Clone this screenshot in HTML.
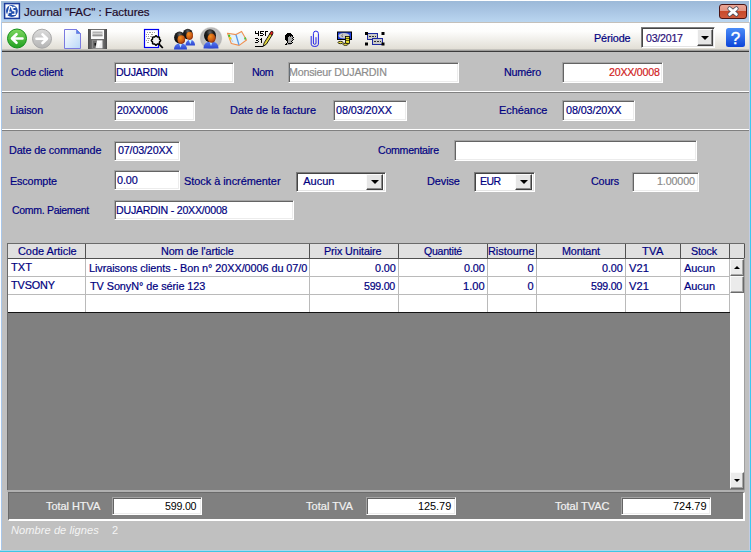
<!DOCTYPE html>
<html><head><meta charset="utf-8">
<style>
*{box-sizing:border-box;margin:0;padding:0}
html,body{width:751px;height:552px;overflow:hidden;background:#fff}
body{position:relative;font-family:"Liberation Sans",sans-serif;font-size:11px;color:#000080}
.a{position:absolute}
.tx{position:absolute;white-space:nowrap;line-height:13px;height:13px;transform-origin:0 0;-webkit-text-stroke:0.2px currentColor}
#title{left:1px;top:1px;width:748px;height:21px;background:linear-gradient(#9cb9d8 0%,#aac6e4 50%,#bad6f0 100%)}
#close{left:719px;top:4px;width:28px;height:15px;border:1px solid #4a1414;border-radius:3px;background:linear-gradient(#eba696 0%,#e29583 45%,#c9492a 50%,#cf5a3c 100%)}
#tb{left:2px;top:22px;width:747px;height:30px;border-top:1px solid #c4c0ba;border-bottom:1px solid #3c3c3c;background:linear-gradient(#fff 0%,#fdfdfc 30%,#e2dfd6 92%,#8a8a8a 100%)}
#form{left:2px;top:52px;width:747px;height:498px;background:#c0c0c0}
.inp{position:absolute;background:#fff;border-top:1px solid #a4a4a4;border-left:1px solid #a4a4a4;border-right:1px solid #fff;border-bottom:1px solid #fff;box-shadow:inset 1px 1px 0 #646464, inset -1px -1px 0 #ececec}
.sep{position:absolute;left:2px;width:747px;height:2px;border-top:1px solid #fff;border-bottom:1px solid #808080}
.btn{position:absolute;background:#e6e6e6;border-top:1px solid #fbfbfb;border-left:1px solid #fbfbfb;border-right:1px solid #404040;border-bottom:1px solid #404040;box-shadow:inset -1px -1px 0 #8c8c8c}
.btn i{position:absolute;left:50%;top:50%;margin-left:-4px;margin-top:-2px;width:0;height:0;border-left:4px solid transparent;border-right:4px solid transparent;border-top:4px solid #000}
.sb{position:absolute;background:#ebebeb;border-top:1px solid #fafafa;border-left:1px solid #fafafa;border-right:1px solid #6a6a6a;border-bottom:1px solid #6a6a6a;box-shadow:inset -1px -1px 0 #a8a8a8}
.sb i.up{position:absolute;left:3px;top:6px;width:0;height:0;border-left:3px solid transparent;border-right:3px solid transparent;border-bottom:3px solid #000}
.sb i.dn{position:absolute;left:3px;top:6px;width:0;height:0;border-left:3px solid transparent;border-right:3px solid transparent;border-top:3px solid #000}

.inp.cmb{border-top-color:#7c7c7c;border-left-color:#7c7c7c;box-shadow:inset 1px 1px 0 #454545, inset -1px -1px 0 #e4e4e4}

</style></head><body>
<div class="a" id="win" style="left:0;top:0;width:751px;height:552px;background:#fff"></div>
<div class="a" id="title"></div>
<div class="a" id="close"></div>
<div class="a" id="tb"></div>
<div class="a" id="form"></div>
<div class="a" style="left:0;top:0;width:1px;height:552px;background:#fff"></div>
<div class="a" style="left:1px;top:22px;width:1px;height:528px;background:#a9c7ea"></div>
<div class="a" style="left:749px;top:22px;width:1px;height:528px;background:#c4cce2"></div>
<div class="a" style="left:750px;top:0;width:1px;height:552px;background:#3ac8f0"></div>
<div class="a" style="left:0;top:550px;width:751px;height:1px;background:#a6d8ee"></div>
<div class="a" style="left:0;top:551px;width:751px;height:1px;background:#3ec6e4"></div>
<!-- toolbar combo -->
<div class="inp cmb" style="left:641px;top:27px;width:74px;height:21px"><div class="btn" style="left:55px;top:1px;width:16px;height:17px"><i></i></div></div>
<!-- section 1 -->
<div class="inp" style="left:114px;top:62px;width:120px;height:21px"></div>
<div class="inp" style="left:288px;top:62px;width:171px;height:21px"></div>
<div class="inp" style="left:562px;top:62px;width:101px;height:21px"></div>
<div class="sep" style="top:91px"></div>
<!-- section 2 -->
<div class="inp" style="left:114px;top:100px;width:81px;height:21px"></div>
<div class="inp" style="left:333px;top:100px;width:74px;height:21px"></div>
<div class="inp" style="left:562px;top:100px;width:73px;height:21px"></div>
<div class="sep" style="top:129px"></div>
<!-- section 3 -->
<div class="inp" style="left:114px;top:141px;width:66px;height:20px"></div>
<div class="inp" style="left:454px;top:140px;width:243px;height:21px"></div>
<div class="inp" style="left:114px;top:170px;width:66px;height:20px"></div>
<div class="inp cmb" style="left:296px;top:172px;width:90px;height:20px"><div class="btn" style="left:69px;top:1px;width:17px;height:16px"><i></i></div></div>
<div class="inp cmb" style="left:474px;top:172px;width:61px;height:20px"><div class="btn" style="left:40px;top:1px;width:17px;height:16px"><i></i></div></div>
<div class="inp" style="left:632px;top:172px;width:67px;height:20px"></div>
<div class="inp" style="left:114px;top:200px;width:180px;height:20px"></div>
<!-- grid -->
<div class="a" style="left:7px;top:243px;width:738px;height:247px;background:#808080;border-left:1px solid #6a6a6a;border-top:1px solid #6a6a6a;border-right:1px solid #a0a0a0"></div>
<div class="a" style="left:8px;top:244px;width:722px;height:68px;background:#fff"></div>
<div class="a" style="left:8px;top:244px;width:736px;height:14px;background:#e0e0e0"></div>
<div class="a" style="left:8px;top:258px;width:736px;height:1px;background:#505050"></div>
<div class="a" style="left:8px;top:276px;width:722px;height:1px;background:#bababa"></div>
<div class="a" style="left:8px;top:294px;width:722px;height:1px;background:#bababa"></div>
<div class="a" style="left:8px;top:312px;width:722px;height:1px;background:#141414"></div>
<div class="a" style="left:85px;top:244px;width:1px;height:14px;background:#505050"></div>
<div class="a" style="left:85px;top:259px;width:1px;height:53px;background:#bababa"></div>
<div class="a" style="left:309px;top:244px;width:1px;height:14px;background:#505050"></div>
<div class="a" style="left:309px;top:259px;width:1px;height:53px;background:#bababa"></div>
<div class="a" style="left:398px;top:244px;width:1px;height:14px;background:#505050"></div>
<div class="a" style="left:398px;top:259px;width:1px;height:53px;background:#bababa"></div>
<div class="a" style="left:487px;top:244px;width:1px;height:14px;background:#505050"></div>
<div class="a" style="left:487px;top:259px;width:1px;height:53px;background:#bababa"></div>
<div class="a" style="left:536px;top:244px;width:1px;height:14px;background:#505050"></div>
<div class="a" style="left:536px;top:259px;width:1px;height:53px;background:#bababa"></div>
<div class="a" style="left:625px;top:244px;width:1px;height:14px;background:#505050"></div>
<div class="a" style="left:625px;top:259px;width:1px;height:53px;background:#bababa"></div>
<div class="a" style="left:680px;top:244px;width:1px;height:14px;background:#505050"></div>
<div class="a" style="left:680px;top:259px;width:1px;height:53px;background:#bababa"></div>
<div class="a" style="left:729px;top:244px;width:1px;height:14px;background:#505050"></div>
<div class="a" style="left:744px;top:244px;width:1px;height:14px;background:#505050"></div>
<!-- scrollbar -->
<div class="a" style="left:729px;top:259px;width:1px;height:53px;background:#bababa"></div>
<div class="a" style="left:730px;top:259px;width:14px;height:230px;background:#fff"></div>
<div class="sb" style="left:730px;top:259px;width:14px;height:17px"><i class="up"></i></div>
<div class="sb" style="left:730px;top:276px;width:14px;height:17px"></div>
<div class="sb" style="left:730px;top:472px;width:14px;height:17px"><i class="dn"></i></div>
<!-- totals -->
<div class="a" style="left:7px;top:490px;width:738px;height:2px;background:#b0b0b0"></div>
<div class="a" style="left:8px;top:492px;width:737px;height:29px;background:#808080;border-left:1px solid #6a6a6a;border-top:1px solid #6a6a6a;border-right:2px solid #fff;border-bottom:2px solid #fff"></div>
<div class="inp" style="left:112px;top:497px;width:90px;height:18px"></div>
<div class="inp" style="left:366px;top:497px;width:90px;height:18px"></div>
<div class="inp" style="left:621px;top:497px;width:90px;height:18px"></div>

<svg class="a" style="left:0;top:0" width="751" height="60" viewBox="0 0 751 60">
<defs><linearGradient id="flop" x1="0" y1="0" x2="1" y2="0"><stop offset="0" stop-color="#4a4a4a"/><stop offset="0.2" stop-color="#6e6e6e"/><stop offset="0.8" stop-color="#6e6e6e"/><stop offset="1" stop-color="#4a4a4a"/></linearGradient>
<linearGradient id="gg" x1="0" y1="0" x2="0" y2="1"><stop offset="0" stop-color="#7fd860"/><stop offset="1" stop-color="#20a020"/></linearGradient>
<linearGradient id="gy" x1="0" y1="0" x2="0" y2="1"><stop offset="0" stop-color="#dcdcdc"/><stop offset="1" stop-color="#b4b4b4"/></linearGradient>
<linearGradient id="doc" x1="0" y1="0" x2="1" y2="1"><stop offset="0" stop-color="#ffffff"/><stop offset="1" stop-color="#b8d8f8"/></linearGradient>
<linearGradient id="hb" x1="0" y1="0" x2="0" y2="1"><stop offset="0" stop-color="#4a8cf8"/><stop offset="1" stop-color="#0c44d8"/></linearGradient>
<radialGradient id="halo" cx="0.5" cy="0.5" r="0.5"><stop offset="0" stop-color="#c8c8c8"/><stop offset="0.7" stop-color="#bdbdbd"/><stop offset="0.88" stop-color="#b6b6b6"/><stop offset="1" stop-color="#e4e2dc" stop-opacity="0"/></radialGradient>
<radialGradient id="face" cx="0.35" cy="0.3" r="0.8"><stop offset="0" stop-color="#f5901e"/><stop offset="0.6" stop-color="#c85a14"/><stop offset="1" stop-color="#7a1e06"/></radialGradient><radialGradient id="hair" cx="0.5" cy="0.25" r="0.7"><stop offset="0" stop-color="#6a6a6a"/><stop offset="0.4" stop-color="#202020"/><stop offset="1" stop-color="#0a0a0a"/></radialGradient>
<linearGradient id="body" x1="0" y1="0" x2="0" y2="1"><stop offset="0" stop-color="#5a7af0"/><stop offset="1" stop-color="#2a44d0"/></linearGradient>
</defs>
<!-- title icon -->
<rect x="4.6" y="3.6" width="14.8" height="14.8" fill="#fff" stroke="#1c3c9c" stroke-width="1.5"/>
<circle cx="11.9" cy="11" r="5.9" fill="#1e4eae"/>
<path d="M7.6,15 L9.8,6.6 L11.3,6.6 L12.3,10.2" fill="none" stroke="#fff" stroke-width="1.2"/>
<path d="M8.4,12.2 H11.2" stroke="#fff" stroke-width="1.2"/>
<path d="M15.4,7.3 H12.8 V10.6 H15 V14.3 H11.8" fill="none" stroke="#fff" stroke-width="1.2"/>
<!-- back -->
<circle cx="17" cy="38.5" r="9.5" fill="url(#gg)" stroke="#14901a" stroke-width="1"/>
<path d="M22.5 38.5H12.5M16.5 34.2L12 38.5L16.5 42.8" fill="none" stroke="#fff" stroke-width="2.6" stroke-linecap="round" stroke-linejoin="round"/>
<!-- forward -->
<circle cx="42" cy="38.7" r="9.5" fill="url(#gy)" stroke="#a8a8a8" stroke-width="1"/>
<path d="M36.5 38.7H46.5M42.5 34.4L47 38.7L42.5 43" fill="none" stroke="#fff" stroke-width="2.6" stroke-linecap="round" stroke-linejoin="round"/>
<!-- new doc -->
<path d="M64.5 29.5H76.5L80.5 33.5V48.5H64.5Z" fill="url(#doc)" stroke="#7a7ae0" stroke-width="1"/>
<path d="M76.5 29.5V33.5H80.5Z" fill="#4a90e8" stroke="#7a7ae0" stroke-width="0.8"/>
<!-- floppy -->
<rect x="88" y="29" width="19" height="20" fill="url(#flop)"/>
<rect x="91" y="30" width="13" height="9" fill="#fafafa"/>
<rect x="92.5" y="31.5" width="10" height="5" fill="#b4b4b4"/>
<rect x="92.5" y="33" width="10" height="0.8" fill="#d8d8d8"/>
<rect x="92.5" y="35.2" width="10" height="0.8" fill="#8c8c8c"/>
<rect x="92.5" y="40.3" width="10" height="8" fill="#f0f0f0"/>
<path d="M92.5,40.3 H97 L95.5,48.3 H92.5Z" fill="#6a6a6a"/>
<path d="M97,41 L101.5,41 L98,48.3" fill="#fff"/>
<rect x="94.5" y="43" width="1.4" height="2.5" fill="#101010"/>
<!-- search doc -->
<rect x="144.5" y="29.5" width="14" height="18" fill="#fff" stroke="#0000f0" stroke-width="1.2"/>
<g fill="#a0a0a0"><rect x="147" y="32" width="1" height="1"/><rect x="149" y="32" width="2" height="1"/><rect x="152" y="32" width="1" height="1"/><rect x="154" y="32" width="1" height="1"/>
<rect x="146" y="34" width="1" height="1"/><rect x="148" y="34" width="1" height="1"/><rect x="151" y="34" width="2" height="1"/>
<rect x="146" y="36" width="1" height="1"/><rect x="148" y="36" width="1" height="1"/><rect x="150" y="36" width="2" height="1"/>
<rect x="147" y="38" width="3" height="1"/><rect x="146" y="40" width="1" height="1"/><rect x="148" y="40" width="1" height="1"/><rect x="147" y="42" width="2" height="1"/></g>
<path d="M158.8 43.8L162.8 48" stroke="#000" stroke-width="1.8"/>
<path d="M160.65,40.50 L160.50,40.94 L160.12,41.32 L159.71,41.63 L159.46,41.94 L159.42,42.33 L159.49,42.83 L159.49,43.37 L159.29,43.79 L158.87,43.99 L158.33,43.99 L157.83,43.92 L157.44,43.96 L157.13,44.21 L156.82,44.62 L156.44,45.00 L156.00,45.15 L155.56,45.00 L155.18,44.62 L154.87,44.21 L154.56,43.96 L154.17,43.92 L153.67,43.99 L153.13,43.99 L152.71,43.79 L152.51,43.37 L152.51,42.83 L152.58,42.33 L152.54,41.94 L152.29,41.63 L151.88,41.32 L151.50,40.94 L151.35,40.50 L151.50,40.06 L151.88,39.68 L152.29,39.37 L152.54,39.06 L152.58,38.67 L152.51,38.17 L152.51,37.63 L152.71,37.21 L153.13,37.01 L153.67,37.01 L154.17,37.08 L154.56,37.04 L154.87,36.79 L155.18,36.38 L155.56,36.00 L156.00,35.85 L156.44,36.00 L156.82,36.38 L157.13,36.79 L157.44,37.04 L157.83,37.08 L158.33,37.01 L158.87,37.01 L159.29,37.21 L159.49,37.63 L159.49,38.17 L159.42,38.67 L159.46,39.06 L159.71,39.37 L160.12,39.68 L160.50,40.06Z" fill="#f2f2f2" stroke="#000" stroke-width="1.5"/>
<!-- two people -->
<path d="M185.5,45.5 C185.5,42.3 187.4,39.8 190.25,39.8 C193.1,39.8 195,42.3 195,45.5 Z" fill="url(#body)"/>
<path d="M188.65,39.8 L191.85,39.8 L190.25,44.3Z" fill="#bfefff"/>
<ellipse cx="187.8" cy="34" rx="4.9" ry="5.3" fill="url(#hair)"/>
<ellipse cx="189.6" cy="35.8" rx="3.4" ry="4.1" fill="url(#face)"/>
<path d="M174,49.5 C174,45.8 176.6,43.3 180.5,43.3 C184.4,43.3 187,45.8 187,49.5 Z" fill="url(#body)"/>
<path d="M178.9,43.3 L182.1,43.3 L180.5,47.8Z" fill="#bfefff"/>
<ellipse cx="179.6" cy="37.6" rx="5.5" ry="6" fill="url(#hair)"/>
<ellipse cx="181.3" cy="39.6" rx="3.8" ry="4.3" fill="url(#face)"/>
<!-- single person with halo -->
<circle cx="211" cy="38.2" r="11.8" fill="url(#halo)"/>
<path d="M203.5,48.6 C203.5,44.1 206.5,41.6 211.0,41.6 C215.5,41.6 218.5,44.1 218.5,48.6 Z" fill="url(#body)"/>
<path d="M209.4,41.6 L212.6,41.6 L211.0,46.1Z" fill="#bfefff"/>
<ellipse cx="210" cy="35.6" rx="6" ry="6.4" fill="url(#hair)"/>
<ellipse cx="211.6" cy="38.2" rx="4" ry="4.6" fill="url(#face)"/>
<!-- book -->
<path d="M227.5,33.3 L236,34.6 L241.6,31.4 L246.5,40 L239.2,45.4 L231.3,43.5 Z" fill="#e4f2fc" stroke="#f09050" stroke-width="1.1" stroke-linejoin="round"/>
<path d="M236,34.8 L239,45" stroke="#5a9ae8" stroke-width="1.3"/>
<path d="M230,37 L233,42" stroke="#a8d0f4" stroke-width="1"/>
<ellipse cx="229.2" cy="35.8" rx="1.1" ry="1.3" fill="#40c030"/><ellipse cx="230.3" cy="38.2" rx="1.1" ry="1.2" fill="#f0d000"/>
<ellipse cx="245.2" cy="38.5" rx="1" ry="1.2" fill="#50c040"/>
<!-- 45/31 pencil -->
<rect x="255" y="31" width="1" height="1" fill="#000"/><rect x="258" y="31" width="1" height="1" fill="#000"/><rect x="260" y="31" width="4" height="1" fill="#000"/><rect x="265" y="31" width="3" height="1" fill="#000"/><rect x="255" y="32" width="1" height="1" fill="#000"/><rect x="258" y="32" width="1" height="1" fill="#000"/><rect x="260" y="32" width="1" height="1" fill="#000"/><rect x="265" y="32" width="1" height="1" fill="#000"/><rect x="255" y="33" width="4" height="1" fill="#000"/><rect x="260" y="33" width="3" height="1" fill="#000"/><rect x="265" y="33" width="1" height="1" fill="#000"/><rect x="258" y="34" width="1" height="1" fill="#000"/><rect x="263" y="34" width="1" height="1" fill="#000"/><rect x="265" y="34" width="1" height="1" fill="#000"/><rect x="258" y="35" width="1" height="1" fill="#000"/><rect x="260" y="35" width="3" height="1" fill="#000"/><rect x="265" y="35" width="1" height="1" fill="#000"/><rect x="255" y="38" width="3" height="1" fill="#000"/><rect x="261" y="38" width="1" height="1" fill="#000"/><rect x="258" y="39" width="1" height="1" fill="#000"/><rect x="260" y="39" width="2" height="1" fill="#000"/><rect x="256" y="40" width="2" height="1" fill="#000"/><rect x="261" y="40" width="1" height="1" fill="#000"/><rect x="258" y="41" width="1" height="1" fill="#000"/><rect x="261" y="41" width="1" height="1" fill="#000"/><rect x="255" y="42" width="3" height="1" fill="#000"/><rect x="261" y="42" width="1" height="1" fill="#000"/><rect x="255" y="46" width="8" height="1" fill="#000"/><path d="M263.2,46.3 L264.2,42.8 L270.2,33.2 L272.4,34.6 L266.4,44.2 Z" fill="#f0e848" stroke="#000" stroke-width="0.9" stroke-linejoin="round"/>
<path d="M269.6,34.1 L270.9,31.6 Q272.2,30.8 273,31.9 L272.8,33.9 L271.9,35.2 Z" fill="#e82020" stroke="#000" stroke-width="0.7"/>
<path d="M264.8,43.5 L270.8,34" stroke="#b8a020" stroke-width="0.6"/>
<!-- face -->
<rect x="287" y="33" width="4" height="1" fill="#000"/><rect x="286" y="34" width="6" height="1" fill="#000"/><rect x="285" y="35" width="8" height="1" fill="#000"/><rect x="285" y="36" width="4" height="1" fill="#000"/><rect x="290" y="36" width="1" height="1" fill="#000"/><rect x="292" y="36" width="1" height="1" fill="#000"/><rect x="285" y="37" width="3" height="1" fill="#000"/><rect x="293" y="37" width="1" height="1" fill="#000"/><rect x="285" y="38" width="3" height="1" fill="#000"/><rect x="292" y="38" width="1" height="1" fill="#000"/><rect x="285" y="39" width="3" height="1" fill="#000"/><rect x="293" y="39" width="1" height="1" fill="#000"/><rect x="286" y="40" width="2" height="1" fill="#000"/><rect x="292" y="40" width="1" height="1" fill="#000"/><rect x="287" y="41" width="1" height="1" fill="#000"/><rect x="291" y="41" width="1" height="1" fill="#000"/><rect x="287" y="42" width="1" height="1" fill="#000"/><rect x="292" y="42" width="1" height="1" fill="#000"/><rect x="286" y="43" width="1" height="1" fill="#000"/><rect x="288" y="43" width="4" height="1" fill="#000"/><rect x="285" y="44" width="2" height="1" fill="#000"/><rect x="289" y="36" width="1" height="1" fill="#a8a8a8"/><rect x="291" y="36" width="1" height="1" fill="#a8a8a8"/><rect x="288" y="37" width="5" height="1" fill="#a8a8a8"/><rect x="288" y="38" width="4" height="1" fill="#a8a8a8"/><rect x="288" y="39" width="5" height="1" fill="#a8a8a8"/><rect x="288" y="40" width="4" height="1" fill="#a8a8a8"/><rect x="288" y="41" width="3" height="1" fill="#a8a8a8"/><rect x="288" y="42" width="4" height="1" fill="#a8a8a8"/><rect x="287" y="43" width="1" height="1" fill="#a8a8a8"/><rect x="287" y="44" width="4" height="1" fill="#a8a8a8"/>
<!-- paperclip -->
<path d="M316,37.2 V43 A1.3,1.3 0 0 1 313.4,43 V33.6 A2.5,2.5 0 0 1 318.4,33.6 V44.2 A3.6,2.3 0 0 1 311.2,44.2 V36" fill="none" stroke="#2424e8" stroke-width="1"/>
<!-- money -->
<rect x="337.5" y="32" width="14" height="7.5" fill="#2040e0" stroke="#000" stroke-width="1"/>
<ellipse cx="344" cy="35.8" rx="5.5" ry="2.8" fill="#c8c8c8"/>
<path d="M343 34.5L341.5 35.8L343 37" fill="none" stroke="#606060" stroke-width="0.8"/>
<rect x="345.5" y="36.5" width="4" height="7" fill="#e8e030" stroke="#000" stroke-width="0.8"/>
<path d="M345.5 38.5H349.5M345.5 40.5H349.5" stroke="#000" stroke-width="0.6"/>
<ellipse cx="340.5" cy="42.5" rx="2.5" ry="1.2" fill="#f0e040" stroke="#000" stroke-width="0.8"/>
<ellipse cx="345.5" cy="44.3" rx="2.5" ry="1.1" fill="#f0e040" stroke="#000" stroke-width="0.8"/>
<!-- selection -->
<rect x="367.5" y="33.5" width="10" height="6" fill="#c8c8c8" stroke="#1c28a0" stroke-width="1"/>
<rect x="372.5" y="38.5" width="10" height="6" fill="#c8c8c8" stroke="#1c28a0" stroke-width="1"/>
<g fill="#303030"><rect x="369" y="36" width="2" height="1"/><rect x="372" y="36" width="2" height="1"/><rect x="375" y="36" width="1" height="1"/>
<rect x="374" y="41" width="2" height="1"/><rect x="377" y="41" width="2" height="1"/><rect x="380" y="41" width="1" height="1"/></g>
<rect x="365" y="32" width="3" height="3" fill="#000"/><rect x="381.5" y="32" width="3" height="3" fill="#000"/>
<rect x="365" y="42.5" width="3" height="3" fill="#000"/><rect x="381.5" y="42.5" width="3" height="3" fill="#000"/>
<!-- help -->
<rect x="726" y="28" width="19" height="19" rx="2.5" fill="url(#hb)"/>
<text x="735.6" y="44.2" font-family="Liberation Sans" font-size="17" fill="#fff" text-anchor="middle" stroke="#fff" stroke-width="0.4">?</text>
<!-- close X -->
<path d="M729.6,8.6L736.4,14.4M736.4,8.6L729.6,14.4" stroke="#404858" stroke-width="4.4" stroke-linecap="round"/>
<path d="M729.6,8.6L736.4,14.4M736.4,8.6L729.6,14.4" stroke="#fff" stroke-width="2.8" stroke-linecap="round"/>
</svg>
<div class="tx" style="left:24.10px;top:5.50px;color:#1e0a28;letter-spacing:-0.011px;font-size:11.5px">Journal "FAC" : Factures</div>
<div class="tx" style="left:594.02px;top:32.00px;color:#000080;letter-spacing:-0.110px;transform:scaleX(0.9824)">Période</div>
<div class="tx" style="left:645.50px;top:32.00px;color:#2a1078;letter-spacing:-0.242px;transform:scaleX(0.9650)">03/2017</div>
<div class="tx" style="left:10.80px;top:66.00px;color:#000080;letter-spacing:-0.154px;transform:scaleX(0.9727)">Code client</div>
<div class="tx" style="left:116.24px;top:66.00px;color:#000080;letter-spacing:-0.297px;transform:scaleX(0.9630)">DUJARDIN</div>
<div class="tx" style="left:251.53px;top:66.00px;color:#000080;letter-spacing:-0.388px;transform:scaleX(0.9659)">Nom</div>
<div class="tx" style="left:289.33px;top:66.00px;color:#8c8c8c;letter-spacing:-0.193px;transform:scaleX(0.9706)">Monsieur DUJARDIN</div>
<div class="tx" style="left:503.93px;top:66.00px;color:#000080;letter-spacing:-0.205px;transform:scaleX(0.9737)">Numéro</div>
<div class="tx" style="left:608.60px;top:66.00px;color:#d01c1c;letter-spacing:-0.233px;transform:scaleX(0.9667)">20XX/0008</div>
<div class="tx" style="left:9.83px;top:104.00px;color:#000080;letter-spacing:-0.145px;transform:scaleX(0.9750)">Liaison</div>
<div class="tx" style="left:117.40px;top:104.00px;color:#000080;letter-spacing:-0.233px;transform:scaleX(0.9667)">20XX/0006</div>
<div class="tx" style="left:230.20px;top:104.00px;color:#000080;letter-spacing:-0.024px;transform:scaleX(0.9953)">Date de la facture</div>
<div class="tx" style="left:336.40px;top:104.00px;color:#000080;letter-spacing:-0.090px;transform:scaleX(0.9860)">08/03/20XX</div>
<div class="tx" style="left:499.01px;top:104.00px;color:#000080;letter-spacing:-0.036px;transform:scaleX(0.9948)">Echéance</div>
<div class="tx" style="left:565.50px;top:104.00px;color:#000080;letter-spacing:-0.113px;transform:scaleX(0.9825)">08/03/20XX</div>
<div class="tx" style="left:9.42px;top:144.00px;color:#000080;letter-spacing:-0.122px;transform:scaleX(0.9811)">Date de commande</div>
<div class="tx" style="left:117.50px;top:144.00px;color:#000080;letter-spacing:-0.165px;transform:scaleX(0.9746)">07/03/20XX</div>
<div class="tx" style="left:377.70px;top:144.00px;color:#000080;letter-spacing:-0.260px;transform:scaleX(0.9621)">Commentaire</div>
<div class="tx" style="left:10.32px;top:175.00px;color:#000080;letter-spacing:-0.131px;transform:scaleX(0.9812)">Escompte</div>
<div class="tx" style="left:117.40px;top:174.00px;color:#000080;letter-spacing:-0.101px;transform:scaleX(0.9857)">0.00</div>
<div class="tx" style="left:183.90px;top:175.00px;color:#000080;letter-spacing:-0.036px;transform:scaleX(0.9934)">Stock à incrémenter</div>
<div class="tx" style="left:303.20px;top:175.00px;color:#000080;letter-spacing:0.000px">Aucun</div>
<div class="tx" style="left:427.41px;top:175.00px;color:#000080;letter-spacing:-0.071px;transform:scaleX(0.9894)">Devise</div>
<div class="tx" style="left:480.15px;top:175.00px;color:#000080;letter-spacing:-0.524px;transform:scaleX(0.9545)">EUR</div>
<div class="tx" style="left:590.70px;top:175.00px;color:#000080;letter-spacing:-0.166px;transform:scaleX(0.9776)">Cours</div>
<div class="tx" style="left:656.92px;top:175.00px;color:#8c8c8c;letter-spacing:-0.154px;transform:scaleX(0.9769)">1.00000</div>
<div class="tx" style="left:11.50px;top:204.00px;color:#000080;letter-spacing:-0.314px;transform:scaleX(0.9541)">Comm. Paiement</div>
<div class="tx" style="left:116.23px;top:204.00px;color:#000080;letter-spacing:-0.226px;transform:scaleX(0.9651)">DUJARDIN - 20XX/0008</div>
<div class="tx" style="left:17.60px;top:245.00px;color:#000080;letter-spacing:-0.032px;transform:scaleX(0.9941)">Code Article</div>
<div class="tx" style="left:160.52px;top:245.00px;color:#000080;letter-spacing:-0.092px;transform:scaleX(0.9818)">Nom de l'article</div>
<div class="tx" style="left:324.32px;top:245.00px;color:#000080;letter-spacing:-0.098px;transform:scaleX(0.9805)">Prix Unitaire</div>
<div class="tx" style="left:423.90px;top:245.00px;color:#000080;letter-spacing:-0.253px;transform:scaleX(0.9595)">Quantité</div>
<div class="tx" style="left:488.21px;top:245.00px;color:#000080;letter-spacing:-0.044px;transform:scaleX(0.9924)">Ristourne</div>
<div class="tx" style="left:561.62px;top:245.00px;color:#000080;letter-spacing:-0.145px;transform:scaleX(0.9782)">Montant</div>
<div class="tx" style="left:642.00px;top:245.00px;color:#000080;letter-spacing:0.196px;transform:scaleX(1.0190)">TVA</div>
<div class="tx" style="left:691.30px;top:245.00px;color:#000080;letter-spacing:-0.179px;transform:scaleX(0.9750)">Stock</div>
<div class="tx" style="left:10.70px;top:261.00px;color:#000080;letter-spacing:0.074px;transform:scaleX(1.0071)">TXT</div>
<div class="tx" style="left:88.61px;top:262.00px;color:#000080;letter-spacing:-0.064px;transform:scaleX(0.9874);width:223.19px;overflow:hidden">Livraisons clients - Bon n° 20XX/0006 du 07/0</div>
<div class="tx" style="left:375.40px;top:262.00px;color:#000080;letter-spacing:-0.119px;transform:scaleX(0.9833)">0.00</div>
<div class="tx" style="left:464.40px;top:262.00px;color:#000080;letter-spacing:-0.119px;transform:scaleX(0.9833)">0.00</div>
<div class="tx" style="left:527.50px;top:262.00px;color:#000080;letter-spacing:0.000px">0</div>
<div class="tx" style="left:601.90px;top:262.00px;color:#000080;letter-spacing:-0.119px;transform:scaleX(0.9833)">0.00</div>
<div class="tx" style="left:629.00px;top:262.00px;color:#000080;letter-spacing:0.074px;transform:scaleX(1.0079)">V21</div>
<div class="tx" style="left:684.20px;top:262.00px;color:#000080;letter-spacing:-0.025px;transform:scaleX(0.9968)">Aucun</div>
<div class="tx" style="left:10.70px;top:279.00px;color:#000080;letter-spacing:-0.122px;transform:scaleX(0.9867)">TVSONY</div>
<div class="tx" style="left:89.50px;top:280.00px;color:#000080;letter-spacing:-0.067px;transform:scaleX(0.9881)">TV SonyN° de série 123</div>
<div class="tx" style="left:364.10px;top:280.00px;color:#000080;letter-spacing:-0.249px;transform:scaleX(0.9647)">599.00</div>
<div class="tx" style="left:463.39px;top:280.00px;color:#000080;letter-spacing:0.050px;transform:scaleX(1.0075)">1.00</div>
<div class="tx" style="left:527.50px;top:280.00px;color:#000080;letter-spacing:0.000px">0</div>
<div class="tx" style="left:590.60px;top:280.00px;color:#000080;letter-spacing:-0.249px;transform:scaleX(0.9647)">599.00</div>
<div class="tx" style="left:629.00px;top:280.00px;color:#000080;letter-spacing:0.074px;transform:scaleX(1.0079)">V21</div>
<div class="tx" style="left:684.20px;top:280.00px;color:#000080;letter-spacing:-0.025px;transform:scaleX(0.9968)">Aucun</div>
<div class="tx" style="left:46.30px;top:500.00px;color:#f2f2f2;letter-spacing:-0.034px;transform:scaleX(0.9945)">Total HTVA</div>
<div class="tx" style="left:164.50px;top:500.00px;color:#000;letter-spacing:-0.217px;transform:scaleX(0.9691);-webkit-text-stroke:0">599.00</div>
<div class="tx" style="left:305.60px;top:500.00px;color:#f2f2f2;letter-spacing:0.012px;transform:scaleX(1.0021)">Total TVA</div>
<div class="tx" style="left:418.01px;top:500.00px;color:#000;letter-spacing:-0.040px;transform:scaleX(0.9938);-webkit-text-stroke:0">125.79</div>
<div class="tx" style="left:554.90px;top:500.00px;color:#f2f2f2;letter-spacing:0.006px">Total TVAC</div>
<div class="tx" style="left:673.00px;top:500.00px;color:#000;letter-spacing:-0.010px;-webkit-text-stroke:0">724.79</div>
<div class="tx" style="left:10.50px;top:524.00px;color:#f4f4f4;letter-spacing:0.050px;transform:scaleX(1.0087);font-style:italic;-webkit-text-stroke:0;-webkit-text-stroke:0">Nombre de lignes</div>
<div class="tx" style="left:112.00px;top:524.00px;color:#f4f4f4;letter-spacing:0.000px;-webkit-text-stroke:0">2</div>

</body></html>
